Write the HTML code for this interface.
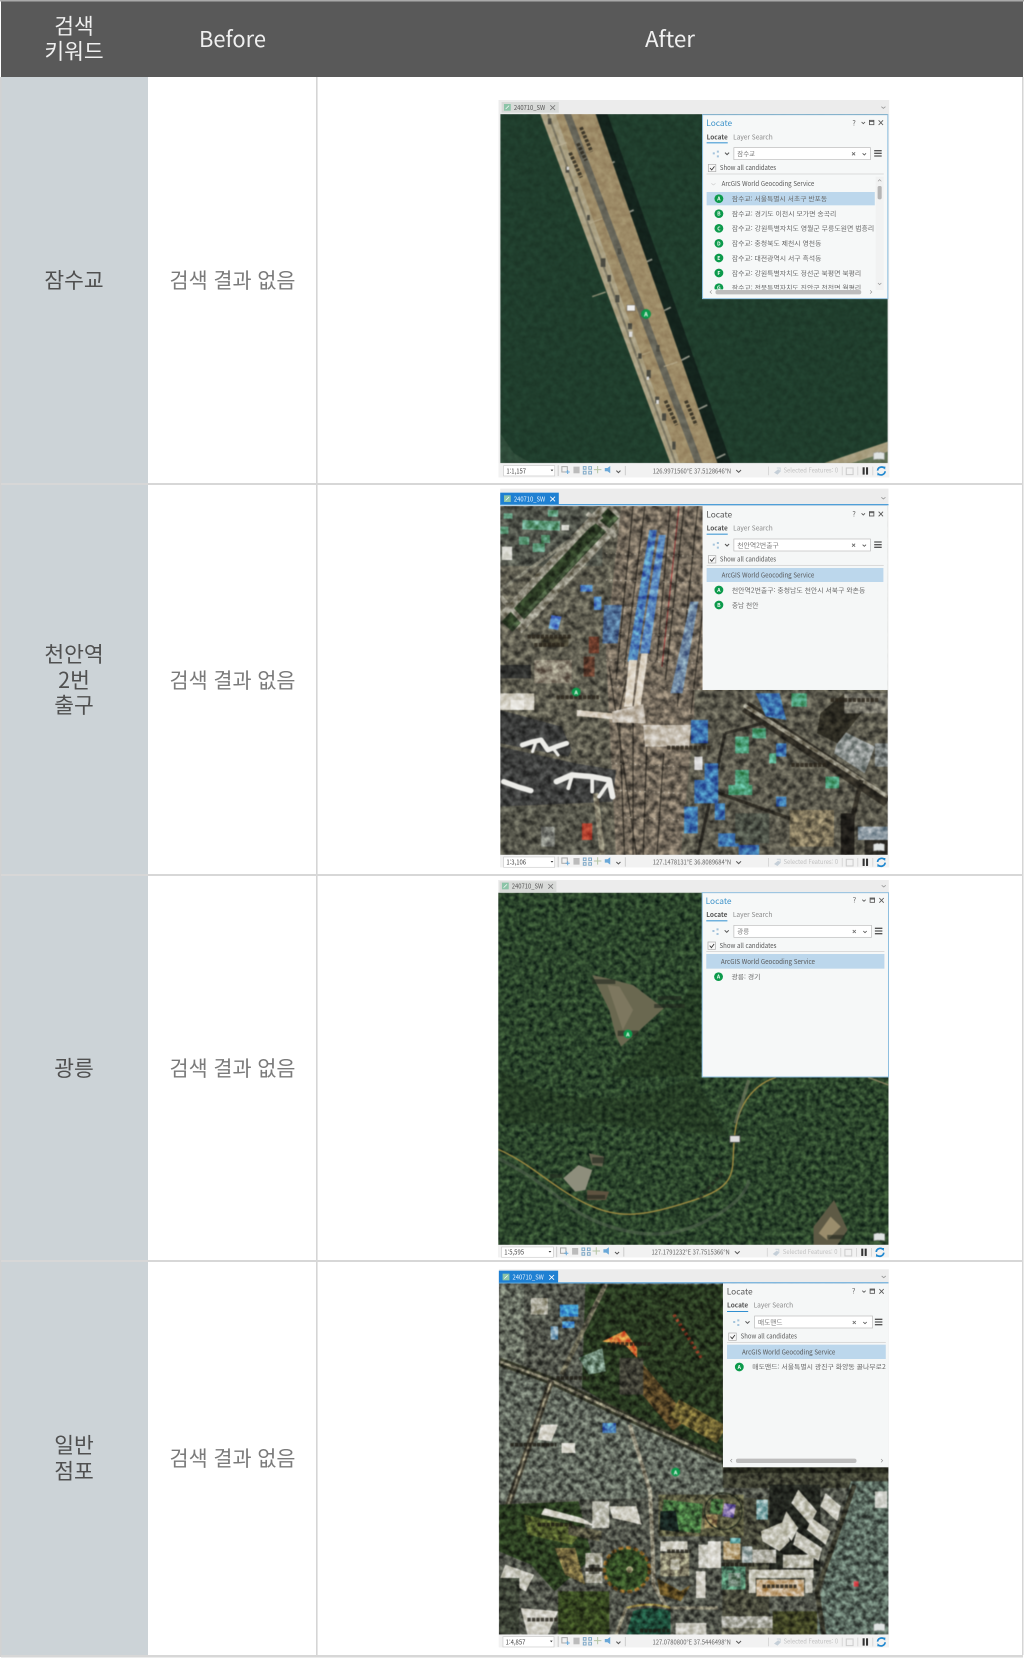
<!DOCTYPE html>
<html lang="ko"><head><meta charset="utf-8"><title>검색 키워드</title>
<style>
html,body{margin:0;padding:0;background:#fff}
svg{display:block}
text{font-family:"Noto Sans CJK KR","Liberation Sans",sans-serif}
.ov{mix-blend-mode:overlay}
</style></head><body>
<svg xmlns="http://www.w3.org/2000/svg" width="1024" height="1658" viewBox="0 0 1024 1658">
<defs>
<filter id="soft" filterUnits="userSpaceOnUse" x="0" y="0" width="1024" height="1658" color-interpolation-filters="sRGB"><feGaussianBlur stdDeviation=".35"/></filter>
<filter id="mb" color-interpolation-filters="sRGB"><feGaussianBlur stdDeviation="1.6"/></filter>
<filter id="un" x="0" y="0" width="100%" height="100%" color-interpolation-filters="sRGB"><feTurbulence type="fractalNoise" baseFrequency=".055" numOctaves="3" seed="7"/><feColorMatrix values="1.7 0 0 0 -.35 1.7 0 0 0 -.35 1.7 0 0 0 -.35 0 0 0 0 1"/></filter>
<filter id="un2" x="0" y="0" width="100%" height="100%" color-interpolation-filters="sRGB"><feTurbulence type="fractalNoise" baseFrequency=".065" numOctaves="3" seed="21"/><feColorMatrix values="1.9 0 0 0 -.45 1.9 0 0 0 -.45 1.9 0 0 0 -.45 0 0 0 0 1"/></filter>
<filter id="fo" x="0" y="0" width="100%" height="100%" color-interpolation-filters="sRGB"><feTurbulence type="fractalNoise" baseFrequency=".07" numOctaves="4" seed="5"/><feColorMatrix values=".4 0 0 0 -.03 .52 0 0 0 .01 .3 0 0 0 .02 0 0 0 0 1"/></filter>
<clipPath id="c1"><rect x="30" y="72" width="1138" height="1048"/></clipPath>
<clipPath id="c2"><rect x="30" y="78" width="1138" height="1047"/></clipPath>
<clipPath id="c3"><rect x="24" y="68" width="1146" height="1057"/></clipPath>
<clipPath id="c4"><rect x="26" y="76" width="1144" height="1054"/></clipPath>
<clipPath id="lst"><rect x="0" y="212" width="506" height="312"/></clipPath>
<clipPath id="lst4"><rect x="0" y="212" width="478" height="312"/></clipPath>
<g id="sti" fill="none" stroke-width="3">
<path d="M200 -16V16" stroke="#bbb" stroke-width="2"/>
<rect x="211" y="-12" width="16" height="16" stroke="#aaa"/><path d="M222 4h12M228 -2v12" stroke="#6aa8d8"/>
<rect x="245" y="-12" width="18" height="20" fill="#bbb" stroke="none"/>
<path d="M274 -12h8v8h-8zM290 -12h8v8h-8zM274 2h8v8h-8zM290 2h8v8h-8z" stroke="#7fa9c8"/>
<path d="M316 -14v22M305 -3h22" stroke="#b5c5a5"/>
<path d="M337 -8h8l8 -6v22l-8 -6h-8z" fill="#6aa8d8" stroke="none"/>
<path d="M371 0l6 6 6 -6" stroke="#555"/>
<path d="M397 -14V14" stroke="#bbb" stroke-width="2"/>
<path d="M723 -2l7 7 7 -7" stroke="#555"/>
<path d="M818 -12V14" stroke="#ccc" stroke-width="2"/>
<path d="M834 6l12 -10 8 6 -10 10z" fill="#c5cfd8" stroke="none"/><path d="M842 -8h10v10" stroke="#cdd5dc"/>
<path d="M1034 -12V14" stroke="#ccc" stroke-width="2"/>
<rect x="1046" y="-8" width="20" height="20" stroke="#ccc"/>
<path d="M1080 -12V14" stroke="#ccc" stroke-width="2"/>
<rect x="1094" y="-10" width="6" height="22" fill="#333" stroke="none"/><rect x="1104" y="-10" width="6" height="22" fill="#333" stroke="none"/>
<path d="M1124 -12V14" stroke="#ccc" stroke-width="2"/>
<path d="M1138 0a12 11 0 0 1 20 -8M1160 2a12 11 0 0 1 -20 8" stroke="#1f87cf" stroke-width="5"/>
<path d="M1152 -12l9 0 -1 9zM1146 14l-9 0 1 -9z" fill="#1f87cf" stroke="none"/>
</g>
<g id="tabi"><rect x="0" y="0" width="20" height="20" fill="#8cc4a8"/><path d="M5 15l10 -10" stroke="#fff" stroke-width="2"/></g>
<g id="pl" fill="none">
<path d="M30 113h6v6h-6zM42 108h6v6h-6zM42 122h6v6h-6z" fill="#a5c4dc"/>
<path d="M66 114l6 6 6 -6" stroke="#555" stroke-width="3"/>
<rect x="17" y="149" width="22" height="22" fill="#f8f8f8" stroke="#aaa" stroke-width="2"/>
<path d="M22 160l5 6 8 -11" stroke="#333" stroke-width="2.5"/>
</g>
<g id="pr" fill="none" stroke="#555">
<path d="M-77 22l5 5 5 -5" stroke-width="2.5"/>
<rect x="-54" y="17" width="13" height="13" stroke-width="2.5"/><path d="M-54 20h13" stroke-width="3"/>
<path d="M-27 17l13 14M-14 17l-13 14" stroke-width="2.5"/>
<path d="M-105 113l9 9M-96 113l-9 9" stroke-width="2.5" stroke="#666"/>
<path d="M-74 116l5 5 5 -5" stroke-width="2.5"/>
<path d="M-40 108h22M-40 116h22M-40 124h22" stroke-width="4" stroke="#555"/>
</g>
<g id="book"><path d="M0 6l12 -3 4 2 4 -2 12 3v20l-14 -2 -2 2 -2 -2 -14 2z" fill="#dfe3e2" stroke="#999" stroke-width="1.5"/></g>
</defs>

<g filter="url(#soft)">
<rect width="1024" height="1658" fill="#fff"/>
<rect x="1" y="0" width="1022" height="77" fill="#595959"/>
<rect x="0" y="0" width="1024" height="1.5" fill="#aaa"/>
<rect x="1" y="77" width="147" height="1578" fill="#ccd3d7"/>
<rect x="0" y="77" width="1.5" height="1580" fill="#d2d2d2"/>
<rect x="316" y="77" width="1.6" height="1578" fill="#d5d5d5"/>
<rect x="1022" y="77" width="1.5" height="1578" fill="#d5d5d5"/>
<rect x="1" y="483" width="1022" height="2" fill="#d7d7d7"/>
<rect x="1" y="874" width="1022" height="2" fill="#d7d7d7"/>
<rect x="1" y="1260" width="1022" height="2" fill="#d7d7d7"/>
<rect x="1" y="1655" width="1022" height="2.5" fill="#d7d7d7"/>
<g text-anchor="middle" font-size="21.5">
<g fill="#f0f0f0"><text x="74" y="34">검색</text><text x="74" y="59">키워드</text></g>
<g fill="#505050"><text x="74" y="288">잠수교</text>
<text x="74" y="662">천안역</text><text x="74" y="688">2번</text><text x="74" y="713">출구</text>
<text x="74" y="1076">광릉</text>
<text x="74" y="1453">일반</text><text x="74" y="1479">점포</text></g>
</g>
<g text-anchor="middle" font-size="21" fill="#7a7a7a">
<text x="232.500" y="288" textLength="126" lengthAdjust="spacingAndGlyphs">검색 결과 없음</text>
<text x="232.500" y="688" textLength="126" lengthAdjust="spacingAndGlyphs">검색 결과 없음</text>
<text x="232.500" y="1076" textLength="126" lengthAdjust="spacingAndGlyphs">검색 결과 없음</text>
<text x="232.500" y="1466" textLength="126" lengthAdjust="spacingAndGlyphs">검색 결과 없음</text>
</g>
<text x="199" y="47" font-size="22" fill="#f0f0f0" textLength="67" lengthAdjust="spacingAndGlyphs">Before</text>
<text x="645" y="47" font-size="22" fill="#f0f0f0" textLength="50" lengthAdjust="spacingAndGlyphs">After</text>

<!-- SCREEN 1 -->
<g transform="translate(490,90) scale(.3406,.3333)">
<rect x="25" y="30" width="1147" height="1132" fill="#ececec"/>
<rect x="34" y="36" width="168" height="32" fill="#d8dad8"/>
<use href="#tabi" x="41" y="42"/>
<text x="70" y="60" font-size="20" fill="#555" textLength="92" lengthAdjust="spacingAndGlyphs">240710_SW</text>
<path d="M177 46l14 14M191 46l-14 14" stroke="#777" stroke-width="2.5"/>
<path d="M1149 50l6 5 6 -5" stroke="#999" stroke-width="2.5" fill="none"/>
<g clip-path="url(#c1)" filter="url(#mb)">
<rect x="30" y="72" width="1138" height="1048" fill="#1f3d2c"/>
<path d="M30 1030L70 1090 120 1120H30Z" fill="#2f4c3a"/>
<path d="M300 72H345L708 1120H660Z" fill="#13231c"/>
<g stroke="#8f9285" stroke-width="5"><path d="M340 228l26 -13M396 372l26 -12M450 520l26 -12M505 665l26 -13M560 812l26 -14M612 958l26 -13M665 1105l26 -13"/></g>
<path d="M148 72H310L668 1120H530Z" fill="#9c8a66"/>
<path d="M148 72H192L558 1120H530Z" fill="#aaa082"/>
<path d="M216 72H238L624 1120H602Z" fill="#666559"/>
<path d="M170 72L545 1120" stroke="#7d7864" stroke-width="6"/>
<g stroke="#b9ae90" stroke-width="4" opacity=".7"><path d="M190 170l35 -12M290 400l40 -14M300 620l40 -14M430 800l40 -14M510 830l40 -14"/></g>
<g fill="#4b4b42"><rect x="170" y="85" width="10" height="18"/><rect x="222" y="230" width="10" height="18"/><rect x="250" y="290" width="8" height="16"/><rect x="285" y="375" width="8" height="16"/><rect x="325" y="505" width="14" height="26"/><rect x="345" y="555" width="10" height="20"/><rect x="368" y="615" width="12" height="22"/><rect x="405" y="700" width="12" height="18"/><rect x="435" y="790" width="10" height="16"/><rect x="460" y="840" width="12" height="24"/><rect x="485" y="920" width="12" height="20"/><rect x="505" y="970" width="12" height="22"/><rect x="535" y="1055" width="10" height="24"/><rect x="488" y="765" width="10" height="20"/><rect x="375" y="475" width="10" height="18"/></g>
<g fill="#ddd"><rect x="408" y="725" width="10" height="16"/><rect x="225" y="230" width="7" height="10"/><rect x="488" y="930" width="8" height="12"/><rect x="460" y="860" width="7" height="10"/></g>
<g stroke="#2d2a20" stroke-width="11" stroke-dasharray="9 4" opacity=".85"><path d="M267 112L298 185M258 160L282 212M235 188L268 262M515 932L548 1005M575 932L605 1005"/></g>
<path d="M980 1120L1168 1055V1120Z" fill="#a69c7d"/>
<path d="M1060 1120L1168 1085V1120Z" fill="#5f6f53"/>
<rect x="30" y="72" width="1138" height="1048" filter="url(#un)" class="ov" opacity=".12"/>
<rect x="402" y="645" width="24" height="18" fill="#eee" stroke="#333"/>
<circle cx="458" cy="672" r="14" fill="#0c9a4b" stroke="#083" stroke-width="1"/>
<text x="458" y="679" font-size="17" font-weight="700" fill="#fff" text-anchor="middle">A</text>
<use href="#book" x="1126" y="1083"/>
</g>
<rect x="25" y="1120" width="1147" height="42" fill="#f2f2f2"/>
<rect x="40" y="1127" width="150" height="31" fill="#fff" stroke="#ccc" stroke-width="2"/>
<text x="48" y="1150" font-size="20" fill="#444" textLength="58" lengthAdjust="spacingAndGlyphs">1:1,157</text>
<path d="M178 1139l4 5 4 -5z" fill="#333"/>
<use href="#sti" y="1142"/>
<text x="478" y="1150" font-size="20" fill="#666" textLength="230" lengthAdjust="spacingAndGlyphs">126.9971560°E 37.5128646°N</text>
<text x="862" y="1148" font-size="19" fill="#c2c2c2" textLength="160" lengthAdjust="spacingAndGlyphs">Selected Features: 0</text>
<g transform="translate(624,74)">
<rect width="544" height="552" fill="#f6f8f8" stroke="#8fbfdf" stroke-width="3"/>
<text x="11" y="34" font-size="25" fill="#3c92c9" textLength="76" lengthAdjust="spacingAndGlyphs">Locate</text>
<text x="440" y="32" font-size="21" fill="#555">?</text>
<text x="12" y="74" font-size="20" font-weight="700" fill="#555" textLength="62" lengthAdjust="spacingAndGlyphs">Locate</text>
<text x="90" y="74" font-size="20" fill="#888" textLength="116" lengthAdjust="spacingAndGlyphs">Layer Search</text>
<rect x="12" y="83" width="62" height="3" fill="#2f8fd0"/>
<rect x="92" y="99" width="401" height="36" fill="#fff" stroke="#bbb" stroke-width="2"/>
<use href="#pl"/><use href="#pr" x="544"/>
<text x="102" y="124" font-size="19" fill="#777">잠수교</text>
<text x="51" y="166" font-size="20" fill="#555" textLength="165" lengthAdjust="spacingAndGlyphs">Show all candidates</text>
<rect x="12" y="177" width="520" height="2" fill="#ccc"/>
<path d="M26 206l6 5 6 -5" stroke="#ccc" stroke-width="2" fill="none"/>
<text x="56" y="214" font-size="20" fill="#555" textLength="272" lengthAdjust="spacingAndGlyphs">ArcGIS World Geocoding Service</text>
<g clip-path="url(#lst)">
<rect x="12" y="232" width="494" height="40" fill="#bcd7ec"/>
<g fill="#0c9a4b"><circle cx="48" cy="252" r="13"/><circle cx="48" cy="297" r="13"/><circle cx="48" cy="341" r="13"/><circle cx="48" cy="386" r="13"/><circle cx="48" cy="430" r="13"/><circle cx="48" cy="475" r="13"/><circle cx="48" cy="519" r="13"/></g>
<g font-size="15" font-weight="700" fill="#fff" text-anchor="middle"><text x="48" y="258">A</text><text x="48" y="303">B</text><text x="48" y="347">C</text><text x="48" y="392">D</text><text x="48" y="436">E</text><text x="48" y="481">F</text><text x="48" y="525">G</text></g>
<g font-size="19" fill="#666">
<text x="86" y="259" textLength="280" lengthAdjust="spacingAndGlyphs">잠수교: 서울특별시 서초구 반포동</text>
<text x="86" y="304" textLength="307" lengthAdjust="spacingAndGlyphs">잠수교: 경기도 이천시 모가면 송곡리</text>
<text x="86" y="348" textLength="418" lengthAdjust="spacingAndGlyphs">잠수교: 강원특별자치도 영월군 무릉도원면 법흥리</text>
<text x="86" y="393" textLength="263" lengthAdjust="spacingAndGlyphs">잠수교: 충청북도 제천시 영천동</text>
<text x="86" y="437" textLength="263" lengthAdjust="spacingAndGlyphs">잠수교: 대전광역시 서구 흑석동</text>
<text x="86" y="482" textLength="380" lengthAdjust="spacingAndGlyphs">잠수교: 강원특별자치도 정선군 북평면 북평리</text>
<text x="86" y="526" textLength="380" lengthAdjust="spacingAndGlyphs">잠수교: 전북특별자치도 진안군 천천면 월평리</text>
</g></g>
<rect x="508" y="186" width="24" height="340" fill="#f1f2f2"/>
<rect x="514" y="214" width="12" height="40" rx="5" fill="#b5b5b5"/>
<path d="M515 200l5 -5 5 5M515 505l5 5 5 -5" stroke="#999" stroke-width="2" fill="none"/>
<rect x="38" y="526" width="428" height="13" rx="6" fill="#bdbdbd"/>
<path d="M27 527l-5 5 5 5M492 527l5 5 -5 5" stroke="#999" stroke-width="2" fill="none"/>
</g>
</g>

<!-- SCREEN 2 -->
<g transform="translate(490,480) scale(.3406,.3333)">
<rect x="30" y="26" width="1140" height="1136" fill="#ececec"/>
<rect x="30" y="38" width="172" height="36" fill="#1f80d2"/>
<rect x="30" y="72" width="1140" height="4" fill="#4f9fd8"/>
<use href="#tabi" x="41" y="46"/>
<text x="70" y="64" font-size="20" fill="#e8f4ff" textLength="92" lengthAdjust="spacingAndGlyphs">240710_SW</text>
<path d="M177 50l14 14M191 50l-14 14" stroke="#fff" stroke-width="2.5"/>
<path d="M1149 52l6 5 6 -5" stroke="#999" stroke-width="2.5" fill="none"/>
<g clip-path="url(#c2)" filter="url(#mb)">
<rect x="30" y="78" width="1138" height="1047" fill="#5f5d50"/>
<rect x="30" y="78" width="300" height="180" fill="#50534a"/>
<g fill="#5f9b7c"><rect x="95" y="122" width="110" height="28" transform="rotate(2 150 135)"/><rect x="85" y="170" width="30" height="24"/><rect x="125" y="190" width="36" height="26"/><rect x="150" y="165" width="26" height="24"/><rect x="40" y="100" width="26" height="16"/><rect x="170" y="90" width="30" height="20"/><rect x="30" y="140" width="24" height="22"/></g>
<g fill="#d8d8d0"><rect x="35" y="200" width="30" height="40"/><rect x="210" y="135" width="22" height="16"/></g>
<path d="M370 90L60 430" stroke="#8c897a" stroke-width="88"/>
<path d="M362 100L50 440" stroke="#2c3b24" stroke-width="44"/>
<path d="M372 110L60 450" stroke="#43553a" stroke-width="12"/>
<path d="M330 110L30 330" stroke="#7b7a6c" stroke-width="10"/>
<path d="M285 100L370 170" stroke="#8a8779" stroke-width="14"/>
<path d="M30 350L110 440" stroke="#8a8779" stroke-width="14"/>
<path d="M385 78H700V620L600 700 560 1125H370L350 720 340 500Z" fill="#746a5c"/>
<g stroke="#3a352d" stroke-width="4" fill="none"><path d="M420 78L370 600M455 78L395 560M530 78L490 540M570 78L515 600M610 78L550 680M660 78L590 700M380 720L395 1125M420 720L420 1125M460 800L450 1125M510 820L490 1125M400 600L375 720M350 560L430 1125"/></g>
<path d="M555 78L505 560" stroke="#7a2c2c" stroke-width="3"/>
<g stroke="#bab2a2" stroke-width="2" stroke-dasharray="4 10" fill="none"><path d="M340 220L640 230M340 300L640 310M340 380L640 390M340 460L640 470M340 540L640 550M345 620L640 630M355 850L560 860M355 930L560 940M355 1010L560 1020"/></g>
<path d="M468 150H490L432 545H404Z" fill="#4d80ba"/>
<path d="M496 165H516L468 520H440Z" fill="#5b89bf"/>
<path d="M588 365H612L565 640H530Z" fill="#6d86a2"/>
<path d="M335 375H388L375 490H330Z" fill="#4f6f96"/>
<path d="M408 540H432L418 680H394Z" fill="#dcd3c4"/>
<path d="M444 520H464L442 680H422Z" fill="#dcd3c4"/>
<path d="M255 690L360 700V718L255 708Z" fill="#d4cabb"/>
<path d="M358 695L450 672 458 730 360 728Z" fill="#c2b9ac"/>
<path d="M450 735H590L585 800H455Z" fill="#c5bdb0"/>
<rect x="290" y="470" width="30" height="50" fill="#6e3d2c"/><rect x="275" y="530" width="32" height="60" fill="#5e3b2c"/>
<path d="M180 405l30 5 -10 40 -28 -5z" fill="#5583c8"/><rect x="305" y="350" width="22" height="40" fill="#4a7cc0"/><rect x="265" y="315" width="36" height="20" fill="#4a7cc0"/>
<rect x="130" y="540" width="110" height="70" fill="#8a8272"/>
<rect x="30" y="555" width="90" height="40" fill="#2e2f2d"/>
<rect x="30" y="640" width="100" height="50" fill="#d0ccc0"/><rect x="60" y="660" width="40" height="30" fill="#e8e6e0"/>
<rect x="150" y="470" width="80" height="30" fill="#4a4636"/>
<path d="M30 690L210 740 240 810 230 830 30 790Z" fill="#3a3b3a"/>
<path d="M30 800L250 850 370 870 360 965 30 980Z" fill="#3e3f3e"/>
<rect x="30" y="980" width="300" height="145" fill="#55554a"/>
<rect x="270" y="1030" width="30" height="50" fill="#b2412f"/>
<rect x="150" y="1040" width="40" height="60" fill="#7d7f78"/>
<path d="M310 940L330 1125" stroke="#87826f" stroke-width="16"/>
<rect x="600" y="630" width="568" height="495" fill="#5a584c"/>
<path d="M750 680L1168 965" stroke="#2f2c24" stroke-width="36"/>
<path d="M745 675L1168 950" stroke="#8c8878" stroke-width="12"/>
<path d="M690 760L610 1125" stroke="#2a2822" stroke-width="9"/>
<path d="M690 760L800 730" stroke="#2a2822" stroke-width="9"/>
<path d="M660 935L1000 1060" stroke="#2f2c24" stroke-width="10"/>
<path d="M1090 900L1040 1125" stroke="#2f2c24" stroke-width="14"/>
<g fill="#3d74b0"><path d="M780 640H850L870 720 810 710Z"/><rect x="590" y="720" width="50" height="70"/><rect x="630" y="850" width="40" height="60"/><rect x="600" y="900" width="70" height="70"/><rect x="570" y="980" width="40" height="80"/><rect x="660" y="970" width="30" height="50"/><rect x="670" y="1060" width="60" height="40"/><rect x="840" y="790" width="30" height="40"/><rect x="840" y="950" width="30" height="30"/><rect x="730" y="1095" width="60" height="30"/></g>
<g fill="#4da07a"><rect x="885" y="640" width="45" height="40"/><rect x="720" y="870" width="40" height="60"/><rect x="720" y="770" width="40" height="50"/><rect x="770" y="745" width="40" height="30"/><rect x="700" y="915" width="70" height="30"/><rect x="985" y="890" width="40" height="35"/><rect x="820" y="820" width="20" height="30"/></g>
<path d="M1030 750L1130 800 1100 880 1010 820Z" fill="#8f9593"/>
<rect x="1130" y="790" width="38" height="70" fill="#7c8281"/>
<path d="M970 700L1040 640 1090 700 1020 790 960 760Z" fill="#2d2b22"/>
<rect x="1040" y="640" width="128" height="60" fill="#77756a"/>
<rect x="600" y="830" width="24" height="40" fill="#ddd"/>
<rect x="720" y="1000" width="100" height="90" fill="#4b5046"/>
<rect x="880" y="990" width="130" height="110" fill="#7c7259"/>
<rect x="1080" y="1040" width="88" height="40" fill="#8d9aa3"/>
<rect x="1030" y="1000" width="40" height="125" fill="#1e1c18"/>
<rect x="1100" y="1080" width="68" height="45" fill="#2a2822"/>
<rect x="30" y="78" width="1138" height="1047" filter="url(#un)" class="ov" opacity=".55"/>
<g fill="none" stroke="#ecece8" stroke-linejoin="round" stroke-linecap="round">
<path d="M95 795L125 785 150 780 170 810 195 800 225 790" stroke-width="15"/><path d="M135 785L125 815M185 805L200 825" stroke-width="9"/>
<path d="M40 905L80 920 120 932" stroke-width="16"/><path d="M195 905L240 885 300 890 350 900 360 950" stroke-width="17"/><path d="M240 890L230 925M300 895L300 935M350 905L320 950" stroke-width="11"/>
</g>
<g stroke="#2a241a" stroke-width="12" stroke-dasharray="10 3" opacity=".8"><path d="M110 470H240M130 495H220M195 652H320M520 803H650M1000 660H1140M885 855H990"/></g>
<circle cx="253" cy="636" r="13" fill="#0c9a4b"/><text x="253" y="643" font-size="16" font-weight="700" fill="#fff" text-anchor="middle">A</text>
<use href="#book" x="1126" y="1087"/>
</g>
<rect x="30" y="1125" width="1142" height="37" fill="#f2f2f2"/>
<rect x="40" y="1131" width="150" height="31" fill="#fff" stroke="#ccc" stroke-width="2"/>
<text x="48" y="1154" font-size="20" fill="#444" textLength="58" lengthAdjust="spacingAndGlyphs">1:3,106</text>
<path d="M178 1143l4 5 4 -5z" fill="#333"/>
<use href="#sti" y="1146"/>
<text x="478" y="1154" font-size="20" fill="#666" textLength="230" lengthAdjust="spacingAndGlyphs">127.1478131°E 36.8089684°N</text>
<text x="862" y="1152" font-size="19" fill="#c2c2c2" textLength="160" lengthAdjust="spacingAndGlyphs">Selected Features: 0</text>
<g transform="translate(624,78)">
<rect width="544" height="552" fill="#f5f7f7"/>
<text x="11" y="34" font-size="25" fill="#555" textLength="76" lengthAdjust="spacingAndGlyphs">Locate</text>
<text x="440" y="32" font-size="21" fill="#555">?</text>
<text x="12" y="74" font-size="20" font-weight="700" fill="#555" textLength="62" lengthAdjust="spacingAndGlyphs">Locate</text>
<text x="90" y="74" font-size="20" fill="#888" textLength="116" lengthAdjust="spacingAndGlyphs">Layer Search</text>
<rect x="12" y="83" width="62" height="3" fill="#2f8fd0"/>
<rect x="92" y="99" width="401" height="36" fill="#fff" stroke="#bbb" stroke-width="2"/>
<use href="#pl"/><use href="#pr" x="544"/>
<text x="102" y="124" font-size="19" fill="#777" textLength="122" lengthAdjust="spacingAndGlyphs">천안역2번출구</text>
<text x="51" y="166" font-size="20" fill="#555" textLength="165" lengthAdjust="spacingAndGlyphs">Show all candidates</text>
<rect x="12" y="177" width="520" height="2" fill="#ccc"/>
<rect x="12" y="186" width="519" height="42" fill="#bcd7ec"/>
<text x="56" y="214" font-size="20" fill="#555" textLength="272" lengthAdjust="spacingAndGlyphs">ArcGIS World Geocoding Service</text>
<circle cx="48" cy="252" r="13" fill="#0c9a4b"/><circle cx="48" cy="297" r="13" fill="#0c9a4b"/>
<text x="48" y="258" font-size="15" font-weight="700" fill="#fff" text-anchor="middle">A</text><text x="48" y="303" font-size="15" font-weight="700" fill="#fff" text-anchor="middle">B</text>
<text x="86" y="259" font-size="19" fill="#666" textLength="392" lengthAdjust="spacingAndGlyphs">천안역2번출구: 충청남도 천안시 서북구 와촌동</text>
<text x="86" y="304" font-size="19" fill="#666" textLength="78" lengthAdjust="spacingAndGlyphs">충남 천안</text>
</g>
</g>

<!-- SCREEN 3 -->
<g transform="translate(490,870) scale(.3406,.3333)">
<rect x="24" y="30" width="1147" height="1132" fill="#ececec"/>
<rect x="28" y="34" width="167" height="32" fill="#d8dad8"/>
<use href="#tabi" x="35" y="38"/>
<text x="64" y="56" font-size="20" fill="#555" textLength="92" lengthAdjust="spacingAndGlyphs">240710_SW</text>
<path d="M171 42l14 14M185 42l-14 14" stroke="#777" stroke-width="2.5"/>
<path d="M1150 46l6 5 6 -5" stroke="#999" stroke-width="2.5" fill="none"/>
<g clip-path="url(#c3)" filter="url(#mb)">
<rect x="24" y="68" width="1146" height="1057" filter="url(#fo)"/>
<path d="M340 620Q500 520 620 300V620Z" fill="#1a2a18" opacity=".35"/>
<path d="M30 600Q300 760 600 620L700 800 300 760 30 760Z" fill="#1c2e1b" opacity=".35"/>
<path d="M300 315L345 325 420 345 510 415 440 480 385 530 370 500 350 420Z" fill="#6a6850"/>
<path d="M345 345L380 350 420 420 390 480Z" fill="#7d775f"/>
<path d="M24 865Q130 920 210 990T410 1085T640 1050 760 930" stroke="#5c6a58" stroke-width="10" fill="none" opacity=".5"/>
<path d="M24 838C120 880 180 950 280 1000S450 1040 600 990 700 890 722 770 830 625 840 622" stroke="#a08c42" stroke-width="4" fill="none"/>
<path d="M760 630L720 760" stroke="#7b8068" stroke-width="10" opacity=".6"/>
<path d="M1110 622L1170 645" stroke="#8d8460" stroke-width="4"/>
<path d="M215 925L260 885 300 900 280 960 250 965Z" fill="#8e8e7c"/>
<path d="M290 850L335 860 330 890 300 885Z" fill="#666450"/>
<path d="M285 960L350 965 340 990 285 990Z" fill="#5f5340"/>
<path d="M950 1070L1010 990 1050 1080 1020 1125H950Z" fill="#5e5a45"/>
<path d="M965 1090L1000 1040 1030 1070 990 1110Z" fill="#9a8d6c"/>
<g fill="#20261d" opacity=".6"><rect x="300" y="328" width="68" height="14"/><rect x="492" y="378" width="70" height="12"/><rect x="482" y="402" width="90" height="12"/><rect x="375" y="482" width="60" height="16"/><rect x="176" y="912" width="36" height="12"/><rect x="282" y="975" width="56" height="12"/><rect x="300" y="862" width="36" height="18"/><rect x="990" y="1095" width="50" height="12"/></g>
<path d="M615 985L685 905" stroke="#20261d" stroke-width="10" stroke-dasharray="12 6" opacity=".7"/>
<rect x="704" y="797" width="30" height="20" fill="#ddd" stroke="#444" stroke-width="2"/>
<circle cx="405" cy="492" r="13" fill="#0c9a4b"/><text x="405" y="499" font-size="16" font-weight="700" fill="#fff" text-anchor="middle">A</text>
<use href="#book" x="1127" y="1086"/>
</g>
<rect x="24" y="1125" width="1147" height="37" fill="#f2f2f2"/>
<rect x="34" y="1131" width="152" height="31" fill="#fff" stroke="#ccc" stroke-width="2"/>
<text x="42" y="1154" font-size="20" fill="#444" textLength="58" lengthAdjust="spacingAndGlyphs">1:5,595</text>
<path d="M172 1143l4 5 4 -5z" fill="#333"/>
<use href="#sti" x="-4" y="1146"/>
<text x="474" y="1154" font-size="20" fill="#666" textLength="230" lengthAdjust="spacingAndGlyphs">127.1791232°E 37.7515366°N</text>
<text x="860" y="1152" font-size="19" fill="#c2c2c2" textLength="160" lengthAdjust="spacingAndGlyphs">Selected Features: 0</text>
<g transform="translate(623,68)">
<rect width="547" height="553" fill="#f6f8f8" stroke="#8fbfdf" stroke-width="3"/>
<text x="10" y="34" font-size="25" fill="#3c92c9" textLength="76" lengthAdjust="spacingAndGlyphs">Locate</text>
<text x="442" y="30" font-size="21" fill="#555">?</text>
<text x="12" y="73" font-size="20" font-weight="700" fill="#555" textLength="62" lengthAdjust="spacingAndGlyphs">Locate</text>
<text x="90" y="73" font-size="20" fill="#888" textLength="116" lengthAdjust="spacingAndGlyphs">Layer Search</text>
<rect x="12" y="83" width="62" height="3" fill="#2f8fd0"/>
<rect x="93" y="98" width="404" height="36" fill="#fff" stroke="#bbb" stroke-width="2"/>
<use href="#pl" y="-1"/><use href="#pr" x="547" y="-1"/>
<text x="103" y="123" font-size="19" fill="#777">광릉</text>
<text x="51" y="166" font-size="20" fill="#555" textLength="167" lengthAdjust="spacingAndGlyphs">Show all candidates</text>
<rect x="12" y="176" width="523" height="2" fill="#ccc"/>
<rect x="12" y="184" width="523" height="44" fill="#bcd7ec"/>
<text x="55" y="214" font-size="20" fill="#555" textLength="276" lengthAdjust="spacingAndGlyphs">ArcGIS World Geocoding Service</text>
<circle cx="48" cy="252" r="13" fill="#0c9a4b"/>
<text x="48" y="258" font-size="15" font-weight="700" fill="#fff" text-anchor="middle">A</text>
<text x="86" y="259" font-size="19" fill="#666" textLength="85" lengthAdjust="spacingAndGlyphs">광릉: 경기</text>
</g>
</g>

<!-- SCREEN 4 -->
<g transform="translate(490,1258) scale(.3406,.3333)">
<rect x="26" y="34" width="1145" height="1134" fill="#ececec"/>
<rect x="26" y="38" width="174" height="36" fill="#1f80d2"/>
<rect x="26" y="73" width="1144" height="4" fill="#4f9fd8"/>
<use href="#tabi" x="37" y="47"/>
<text x="66" y="65" font-size="20" fill="#e8f4ff" textLength="92" lengthAdjust="spacingAndGlyphs">240710_SW</text>
<path d="M174 51l14 14M188 51l-14 14" stroke="#fff" stroke-width="2.5"/>
<path d="M1150 54l6 5 6 -5" stroke="#999" stroke-width="2.5" fill="none"/>
<g clip-path="url(#c4)" filter="url(#mb)">
<rect x="26" y="76" width="1144" height="1054" fill="#50534a"/>
<path d="M280 80H684V620L610 590 400 470 270 390Z" fill="#27371f"/>
<path d="M540 170L620 300" stroke="#8d3c25" stroke-width="10" stroke-dasharray="8 8" fill="none"/>
<path d="M420 330L560 500" stroke="#5e4526" stroke-width="60" opacity=".8"/>
<path d="M540 450L680 530" stroke="#6a5f30" stroke-width="60"/>
<path d="M330 250L395 218 432 270 432 300 398 262Z" fill="#d97d3a"/>
<rect x="205" y="140" width="54" height="36" fill="#3d92cc"/><rect x="212" y="190" width="36" height="20" fill="#4a93cc"/>
<rect x="178" y="205" width="22" height="40" fill="#7ca0b8"/>
<path d="M260 300L330 270 340 340 290 350Z" fill="#6f8a78"/>
<rect x="30" y="80" width="70" height="240" fill="#666c60"/><rect x="120" y="120" width="50" height="50" fill="#aaa899"/>
<path d="M340 78L210 350" stroke="#62604e" stroke-width="14"/>
<rect x="380" y="300" width="70" height="110" fill="#3f3f35"/>
<path d="M26 330L190 370 400 480 680 610 690 720 490 700 470 720 30 730Z" fill="#5f665c"/>
<path d="M26 310L180 368 400 475 680 605" stroke="#2f3124" stroke-width="24" fill="none"/>
<path d="M26 310L180 368 400 475 680 605" stroke="#777462" stroke-width="8" fill="none"/>
<path d="M180 368L30 810" stroke="#3d3a2e" stroke-width="18"/>
<path d="M180 368L30 810" stroke="#7f7a66" stroke-width="6"/>
<path d="M410 500L470 700 478 880 480 980 520 1050" stroke="#8a8674" stroke-width="12" fill="none"/>
<path d="M150 500L200 500 180 550 140 545Z" fill="#d3d0c6"/><rect x="210" y="555" width="40" height="30" fill="#d5d3c9"/>
<rect x="330" y="495" width="40" height="30" fill="#4a80b8"/>
<path d="M690 720H820V1130H680Z" fill="#47483a"/>
<rect x="684" y="630" width="486" height="60" fill="#3e4032"/>
<path d="M684 632H1170" stroke="#26281d" stroke-width="26"/>
<path d="M26 740L260 730 300 900 190 1000 120 920 26 880Z" fill="#2a3c20"/>
<path d="M100 770L280 810 240 860 110 830Z" fill="#4e5a2a"/>
<path d="M150 770L310 805 270 780 160 750Z" fill="#d3d1c6"/>
<rect x="300" y="730" width="50" height="80" fill="#bdbdb2"/><path d="M350 745H430L445 800 360 780Z" fill="#cdcbc0"/>
<path d="M230 800L330 820 320 850 230 830Z" fill="#5a5844"/>
<rect x="280" y="885" width="50" height="90" fill="#a9a89a"/><rect x="290" y="920" width="32" height="28" fill="#4e4e44"/>
<path d="M190 870H250L280 980 220 950Z" fill="#75693f"/>
<circle cx="402" cy="935" r="66" fill="#324a24"/><circle cx="402" cy="935" r="66" fill="none" stroke="#7a5a26" stroke-width="10" stroke-dasharray="14 8"/>
<circle cx="410" cy="935" r="10" fill="#8d8a68"/>
<rect x="495" y="710" width="250" height="125" fill="#58583f"/>
<path d="M510 725L625 738 618 825 500 815Z" fill="#436f3d"/>
<path d="M500 760L545 758 555 822 498 815Z" fill="#172420"/>
<path d="M650 722L685 725 680 770 645 765Z" fill="#40683a"/>
<path d="M688 736L722 740 715 780 682 775Z" fill="#8574ad"/>
<path d="M630 770L670 770 665 810 630 810Z" fill="#8d7a52"/>
<circle cx="685" cy="760" r="55" fill="none" stroke="#2a2f22" stroke-width="4"/>
<rect x="782" y="725" width="34" height="60" fill="#7da5a6"/>
<rect x="500" y="850" width="80" height="30" fill="#c8c6ba"/>
<rect x="500" y="885" width="85" height="70" fill="#85816a"/><rect x="530" y="905" width="26" height="30" fill="#bbb9aa"/>
<rect x="612" y="860" width="60" height="70" fill="#c6c5bb"/><rect x="640" y="850" width="38" height="80" fill="#d8d6ce"/>
<rect x="605" y="940" width="28" height="80" fill="#d0cec4"/>
<path d="M490 960L560 1000 590 980 560 1030 500 1010Z" fill="#5c4a22"/>
<rect x="820" y="680" width="150" height="260" fill="#22251f"/>
<path d="M905 695L960 760 940 800 885 735Z" fill="#c4c3b6"/>
<path d="M985 705L1030 745 1020 790 970 745Z" fill="#c7c6ba"/>
<path d="M870 760L905 810 885 850 855 800Z" fill="#c6c5b8"/>
<path d="M945 780L1000 820 985 860 930 815Z" fill="#c9c8bc"/>
<path d="M795 820L865 790 880 850 850 880 800 850Z" fill="#c4c3b6"/>
<path d="M900 820L975 870 965 910 890 860Z" fill="#bfbeb2"/>
<rect x="770" y="875" width="70" height="40" fill="#b2b1a7"/><rect x="860" y="890" width="90" height="40" fill="#b8b7aa"/>
<rect x="685" y="850" width="50" height="55" fill="#b7a27a"/><rect x="705" y="840" width="30" height="16" fill="#5fa5a5"/>
<rect x="740" y="865" width="30" height="50" fill="#9aa7a6"/>
<rect x="680" y="925" width="70" height="70" fill="#4f7f66"/><rect x="700" y="945" width="36" height="40" fill="#7a8f80"/>
<rect x="770" y="935" width="180" height="25" fill="#c6c4b7"/><rect x="760" y="935" width="20" height="70" fill="#c9c8bc"/><rect x="925" y="945" width="22" height="60" fill="#bdbcb0"/>
<rect x="782" y="965" width="140" height="50" fill="#c3a883"/>
<path d="M1060 670H1170V1130H960L970 1010Z" fill="#59695f"/>
<path d="M1070 680L960 1000 980 1130" stroke="#3a3a2e" stroke-width="14" fill="none"/>
<rect x="1068" y="970" width="14" height="16" fill="#c8353a"/>
<rect x="1130" y="700" width="36" height="50" fill="#cfd0ca"/>
<path d="M420 1060Q470 1040 530 1060V1130H400Z" fill="#1d4a38"/>
<path d="M400 1050Q470 1030 530 1050" stroke="#9a8a4a" stroke-width="7" fill="none"/>
<path d="M400 1050L370 1130" stroke="#8a8672" stroke-width="10"/>
<path d="M530 1050H670" stroke="#7b7866" stroke-width="10"/>
<rect x="545" y="1095" width="90" height="35" fill="#c6c5bb"/>
<rect x="680" y="1075" width="155" height="35" fill="#a6a69c"/><rect x="680" y="1110" width="155" height="20" fill="#6a6a58"/>
<path d="M90 1050L200 1060 170 1130H110Z" fill="#cfcdc4"/>
<path d="M45 920L130 950 105 1000 30 960Z" fill="#c6c5ba"/>
<rect x="830" y="1060" width="130" height="70" fill="#3f4324"/>
<rect x="26" y="960" width="60" height="170" fill="#3a4034"/>
<rect x="200" y="1000" width="150" height="130" fill="#34441f"/>
<rect x="26" y="76" width="1144" height="1054" filter="url(#un2)" class="ov" opacity=".6"/>
<g stroke="#1f1c14" stroke-width="11" stroke-dasharray="10 3" opacity=".8"><path d="M345 258H475M195 360H290M60 560H195M140 800H245M520 880H590M680 920H775M800 985H900M440 1118H530M280 935H330M110 1085H200"/></g>
<circle cx="545" cy="642" r="13" fill="#0c9a4b"/><text x="545" y="649" font-size="16" font-weight="700" fill="#fff" text-anchor="middle">A</text>
<use href="#book" x="1127" y="1093"/>
</g>
<rect x="26" y="1130" width="1145" height="38" fill="#f2f2f2"/>
<rect x="38" y="1136" width="150" height="31" fill="#fff" stroke="#ccc" stroke-width="2"/>
<text x="46" y="1159" font-size="20" fill="#444" textLength="58" lengthAdjust="spacingAndGlyphs">1:4,857</text>
<path d="M176 1148l4 5 4 -5z" fill="#333"/>
<use href="#sti" y="1151"/>
<text x="477" y="1159" font-size="20" fill="#666" textLength="230" lengthAdjust="spacingAndGlyphs">127.0780800°E 37.5446498°N</text>
<text x="862" y="1157" font-size="19" fill="#c2c2c2" textLength="160" lengthAdjust="spacingAndGlyphs">Selected Features: 0</text>
<g transform="translate(684,76)">
<rect width="486" height="552" fill="#f5f7f7"/>
<text x="11" y="34" font-size="25" fill="#555" textLength="76" lengthAdjust="spacingAndGlyphs">Locate</text>
<text x="379" y="31" font-size="21" fill="#555">?</text>
<text x="12" y="73" font-size="20" font-weight="700" fill="#555" textLength="62" lengthAdjust="spacingAndGlyphs">Locate</text>
<text x="90" y="73" font-size="20" fill="#888" textLength="116" lengthAdjust="spacingAndGlyphs">Layer Search</text>
<rect x="12" y="83" width="62" height="3" fill="#2f8fd0"/>
<rect x="93" y="98" width="346" height="36" fill="#fff" stroke="#bbb" stroke-width="2"/>
<use href="#pl"/><use href="#pr" x="486"/>
<text x="103" y="123" font-size="19" fill="#777" textLength="72" lengthAdjust="spacingAndGlyphs">매도맨드</text>
<text x="52" y="165" font-size="20" fill="#555" textLength="165" lengthAdjust="spacingAndGlyphs">Show all candidates</text>
<rect x="12" y="176" width="466" height="2" fill="#ccc"/>
<rect x="12" y="184" width="466" height="43" fill="#bcd7ec"/>
<text x="56" y="213" font-size="20" fill="#555" textLength="274" lengthAdjust="spacingAndGlyphs">ArcGIS World Geocoding Service</text>
<g clip-path="url(#lst4)">
<circle cx="48" cy="251" r="13" fill="#0c9a4b"/>
<text x="48" y="257" font-size="15" font-weight="700" fill="#fff" text-anchor="middle">A</text>
<text x="86" y="257" font-size="19" fill="#666" textLength="392" lengthAdjust="spacingAndGlyphs">매도맨드: 서울특별시 광진구 화양동 꿀나무로2</text>
</g>
<rect x="38" y="526" width="354" height="13" rx="6" fill="#bdbdbd"/>
<path d="M27 527l-5 5 5 5M464 527l5 5 -5 5" stroke="#999" stroke-width="2" fill="none"/>
</g>
</g>
</g>
</svg>
</body></html>
